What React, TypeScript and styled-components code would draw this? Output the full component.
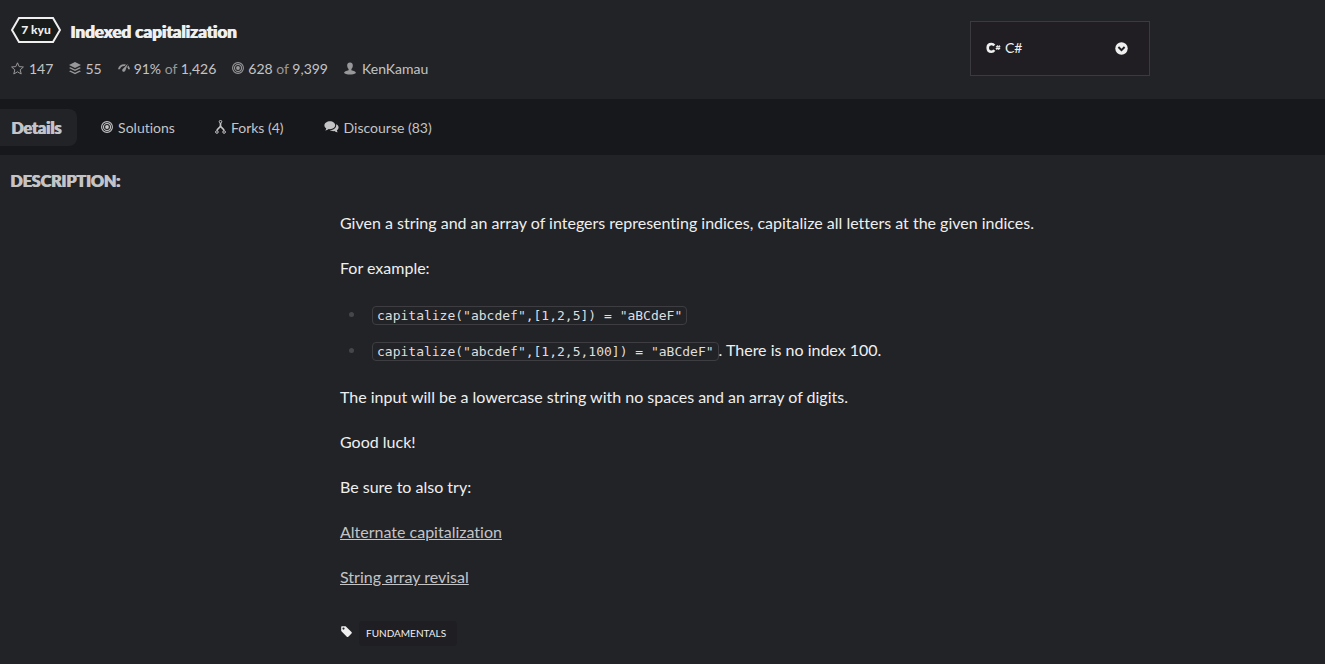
import React from "react";
import styled, { createGlobalStyle } from "styled-components";

const GlobalStyle = createGlobalStyle`
  *, *::before, *::after { box-sizing: border-box; }
  html { background: #222327; }
  body {
    margin: 0;
    background: #222327;
    color: #efefef;
    font-family: Lato, "Liberation Sans", sans-serif;
    font-size: 16px;
    font-variant-ligatures: none;
    line-height: 25px;
  }
  h1, h2, p, ul { margin: 0; padding: 0; }
`;

const Header = styled.header`
  display: flex;
  justify-content: space-between;
  align-items: flex-start;
  height: 99px;
  padding: 16px 175px 0 11px;
`;

const TitleRow = styled.div`
  display: flex;
  align-items: center;
  gap: 9px;
  height: 28px;
`;

const RankBadge = styled.span`
  position: relative;
  display: flex;
  align-items: center;
  justify-content: center;
  width: 50px;
  height: 26px;
  font-size: 12px;
  font-weight: 900;
  line-height: 26px;

  svg {
    position: absolute;
    inset: 0;
  }

  span {
    position: relative;
  }
`;

const Title = styled.h1`
  padding-top: 2px;
  font-size: 17px;
  font-weight: 900;
  text-shadow: 1px 0 0 currentColor;
`;

const Stats = styled.ul`
  display: flex;
  gap: 16px;
  margin-top: 13px;
  list-style: none;
  font-size: 14px;
  line-height: 24px;
  color: #c4c4c6;
`;

const Stat = styled.li`
  display: flex;
  align-items: center;
  gap: 4px;

  svg {
    flex: none;
    color: #98989a;
    margin-bottom: 2px;
  }

  em {
    font-style: normal;
    color: #98989a;
  }
`;

const UserLink = styled.a`
  color: inherit;
  text-decoration: none;
`;

const LanguagePicker = styled.label`
  display: flex;
  align-items: center;
  gap: 4px;
  width: 180px;
  height: 55px;
  margin-top: 5px;
  padding: 0 21px 1px 15px;
  border: 1px solid #3a3a3f;
  background: #201e23;

  select {
    flex: 1;
    min-width: 0;
    padding: 0;
    border: 0;
    outline: 0;
    appearance: none;
    background: transparent;
    color: #efefef;
    font: 14px/24px Lato, "Liberation Sans", sans-serif;
  }

  svg {
    flex: none;
  }
`;

const Tabs = styled.nav`
  display: flex;
  align-items: center;
  gap: 14px;
  height: 56px;
  background: #17181b;
`;

const Tab = styled.a<{ $active?: boolean }>`
  display: flex;
  align-items: center;
  gap: 5px;
  height: 37px;
  padding: ${(p) => (p.$active ? "0 16px 0 11px" : "0 16px 0 10px")};
  border-radius: ${(p) => (p.$active ? "0 8px 8px 0" : "8px")};
  background: ${(p) => (p.$active ? "#222327" : "transparent")};
  color: #c4c4c6;
  font-size: ${(p) => (p.$active ? "16px" : "14px")};
  font-weight: ${(p) => (p.$active ? 900 : 400)};
  text-shadow: ${(p) => (p.$active ? "1px 0 0 currentColor" : "none")};
  text-decoration: none;

  svg {
    flex: none;
  }
`;

const Details = styled.main`
  display: grid;
  grid-template-columns: minmax(0, 1fr) minmax(0, 3fr);
  column-gap: 5px;
  padding: 13px 10px 18px;
`;

const SectionTitle = styled.h2`
  grid-column: 1 / -1;
  color: #c4c4c6;
  font-size: 16px;
  font-weight: 900;
  text-shadow: 1px 0 0 currentColor;
  text-transform: uppercase;
`;

const Description = styled.div`
  grid-column: 2;
  display: flex;
  flex-direction: column;
  align-items: flex-start;
  gap: 20px;
  margin-top: 17px;
`;

const Examples = styled.ul`
  display: flex;
  flex-direction: column;
  gap: 10px;
  padding: 1px 0;
  list-style: none;
`;

const Example = styled.li`
  display: flex;
  align-items: center;
  height: 26px;
  line-height: 26px;

  &::before {
    content: "";
    width: 5px;
    height: 5px;
    margin: 0 18px 0 9px;
    border-radius: 50%;
    background: #46464a;
  }
`;

const Code = styled.code`
  padding: 1px 4px;
  border: 1px solid #3e3e42;
  border-radius: 4px;
  font-family: "DejaVu Sans Mono", monospace;
  font-size: 13px;
  line-height: 18px;
  color: #dededf;
`;

const KataLink = styled.a`
  color: #c4c4c6;
  text-decoration: underline;
`;

const TagRow = styled.div`
  display: flex;
  align-items: center;
  gap: 6px;
  margin-top: 12px;

  svg {
    margin-bottom: 4px;
  }
`;

const Tag = styled.span`
  padding: 0 11px 0 7px;
  border-radius: 4px;
  background: #1f1e22;
  font-size: 10px;
  line-height: 25px;
  text-transform: uppercase;
`;

const StarIcon = () => (
  <svg width="14" height="13" viewBox="0 0 14 13" fill="none" stroke="currentColor" strokeLinejoin="round">
    <path d="M6.5 .8 8.2 4.6 12.4 5 9.2 7.8 10.2 12 6.5 9.8 2.8 12 3.8 7.8 .6 5 4.8 4.6Z" />
  </svg>
);

const LayersIcon = () => (
  <svg width="12" height="13" viewBox="0 0 12 13" fill="currentColor">
    <path d="M6 0 12 3 6 6 0 3Z" />
    <path d="M0 6 1.500 5.200 6 7.400 10.500 5.200 12 6 6 9Z" />
    <path d="M0 9.300 1.500 8.500 6 10.700 10.500 8.500 12 9.300 6 12.300Z" />
  </svg>
);

const GaugeIcon = () => (
  <svg width="12" height="10" viewBox="0 0 12 10" fill="currentColor">
    <path d="M0 6.2C.7 3.2 3 1.3 6.2 1.3L8 1.6 6.7 3.1C4.3 2.9 2.8 4.1 1.9 6.2Z" />
    <path d="M9.8 .8 7.3 7.8C6.8 9 5.2 9.2 4.5 8.2 3.9 7.2 4.3 6.3 5 5.7Z" />
    <path d="M10.1 2.5C11.2 3.5 11.8 4.8 12 6.2H10.1C10 5.3 9.8 4.8 9.3 4.3Z" />
  </svg>
);

const TargetIcon = () => (
  <svg width="12" height="12" viewBox="0 0 12 12" fill="none" stroke="currentColor">
    <circle cx="6" cy="6" r="5.400" strokeWidth="1.100" />
    <circle cx="6" cy="6" r="3.500" strokeWidth="1.100" />
    <circle cx="6" cy="6" r="1.900" fill="currentColor" stroke="none" />
  </svg>
);

const UserIcon = () => (
  <svg width="14" height="13" viewBox="0 0 14 13" fill="currentColor">
    <path d="M6 .5C8.1 .5 9 1.9 8.8 3.9 8.7 5.2 8.2 6.2 7.4 6.9V8.2C9.8 8.7 11.8 9.2 12 11 10.3 12.2 8.2 12.5 6 12.5S1.700 12.2 0 11C.2 9.200 2.200 8.700 4.600 8.200V6.900C3.800 6.200 3.300 5.200 3.200 3.900 3 1.900 3.900 .5 6 .5Z" />
  </svg>
);

const ForkIcon = () => (
  <svg width="11" height="14" viewBox="0 0 11 14" fill="none" stroke="currentColor">
    <circle cx="5.500" cy="1.700" r="1.300" />
    <circle cx="1.900" cy="12" r="1.300" />
    <circle cx="9.100" cy="12" r="1.300" />
    <path strokeWidth="1.700" d="M5.500 3V6M5.500 5.500C5.300 8 2.400 8.200 2 10.500M5.500 5.500C5.700 8 8.600 8.200 9 10.500" />
  </svg>
);

const CommentsIcon = () => (
  <svg width="15" height="12" viewBox="0 0 15 12" fill="currentColor">
    <path d="M6 .3C9 .3 11.200 2 11.200 4.300S9 8.200 6 8.200L4.800 8.100C3.700 9 2.500 9.400 1.200 9.400 1.800 8.800 2.200 8.100 2.200 7.300 1 6.600 .4 5.500 .4 4.300 .4 2 3 .3 6 .3Z" />
    <path d="M12.200 3.300C13.700 4 14.600 5.100 14.600 6.500 14.600 7.600 13.900 8.600 12.900 9.200 12.900 10 13.300 10.700 13.900 11.300 12.500 11.300 11.400 10.900 10.400 10.100 8.700 10.300 7 9.900 5.900 9.100 9.600 9.200 12.600 7 12.200 3.300Z" />
  </svg>
);

const CSharpIcon = () => (
  <svg width="15" height="12" viewBox="0 0 15 12" fill="none" stroke="#efefef">
    <path strokeWidth="2.600" d="M8.300 3.500C7.500 2.400 6.600 2 5.400 2 3 2 1.700 3.600 1.700 5.800S3 9.700 5.400 9.700C6.700 9.700 7.600 9.200 8.300 8.100" />
    <path d="M11.400 3.200 10.800 8M13.300 3.200 12.700 8M9.900 4.700H14.400M9.700 6.500H14.200" />
  </svg>
);

const ChevronCircleIcon = () => (
  <svg width="13" height="13" viewBox="0 0 13 13">
    <circle cx="6.500" cy="6.500" r="6.200" fill="#efefef" />
    <path d="M3.400 5 6.500 8.100 9.600 5" fill="none" stroke="#201e23" strokeWidth="1.900" />
  </svg>
);

const TagIcon = () => (
  <svg width="13" height="13" viewBox="0 0 13 13">
    <path fill="#efefef" fillRule="evenodd" d="M1.800 1.300H5.600L11.500 7.100C12 7.600 12 8.100 11.500 8.600L8.300 11.700C7.800 12.200 7.300 12.200 6.800 11.700L1.200 6V1.900C1.200 1.500 1.400 1.300 1.800 1.300ZM3.500 2.500A1.100 1.100 0 1 0 3.500 4.700 1.100 1.100 0 1 0 3.500 2.500Z" />
  </svg>
);

export default function App() {
  return (
    <>
      <GlobalStyle />
      <Header>
        <div>
          <TitleRow>
            <RankBadge>
              <svg width="50" height="26" viewBox="0 0 50 26" aria-hidden="true">
                <path d="M8 1H42L49 13 42 25H8L1 13Z" fill="#181c1a" stroke="#efefef" strokeWidth="2" />
              </svg>
              <span>7 kyu</span>
            </RankBadge>
            <Title>Indexed capitalization</Title>
          </TitleRow>
          <Stats>
            <Stat><StarIcon />147</Stat>
            <Stat><LayersIcon />55</Stat>
            <Stat><GaugeIcon /><span>91% <em>of</em> 1,426</span></Stat>
            <Stat><TargetIcon /><span>628 <em>of</em> 9,399</span></Stat>
            <Stat><UserIcon /><UserLink href="#user">KenKamau</UserLink></Stat>
          </Stats>
        </div>
        <LanguagePicker>
          <CSharpIcon />
          <select aria-label="Language" defaultValue="csharp">
            <option value="csharp">C#</option>
          </select>
          <ChevronCircleIcon />
        </LanguagePicker>
      </Header>
      <Tabs>
        <Tab href="#details" $active aria-current="page">Details</Tab>
        <Tab href="#solutions"><TargetIcon />Solutions</Tab>
        <Tab href="#forks"><ForkIcon />Forks (4)</Tab>
        <Tab href="#discourse"><CommentsIcon />Discourse (83)</Tab>
      </Tabs>
      <Details>
        <SectionTitle>Description:</SectionTitle>
        <Description>
          <p>Given a string and an array of integers representing indices, capitalize all letters at the given indices.</p>
          <p>For example:</p>
          <Examples>
            <Example>
              <p><Code>{'capitalize("abcdef",[1,2,5]) = "aBCdeF"'}</Code></p>
            </Example>
            <Example>
              <p><Code>{'capitalize("abcdef",[1,2,5,100]) = "aBCdeF"'}</Code>. There is no index 100.</p>
            </Example>
          </Examples>
          <p>The input will be a lowercase string with no spaces and an array of digits.</p>
          <p>Good luck!</p>
          <p>Be sure to also try:</p>
          <KataLink href="#alternate-capitalization">Alternate capitalization</KataLink>
          <KataLink href="#string-array-revisal">String array revisal</KataLink>
          <TagRow><TagIcon /><Tag>Fundamentals</Tag></TagRow>
        </Description>
      </Details>
    </>
  );
}
